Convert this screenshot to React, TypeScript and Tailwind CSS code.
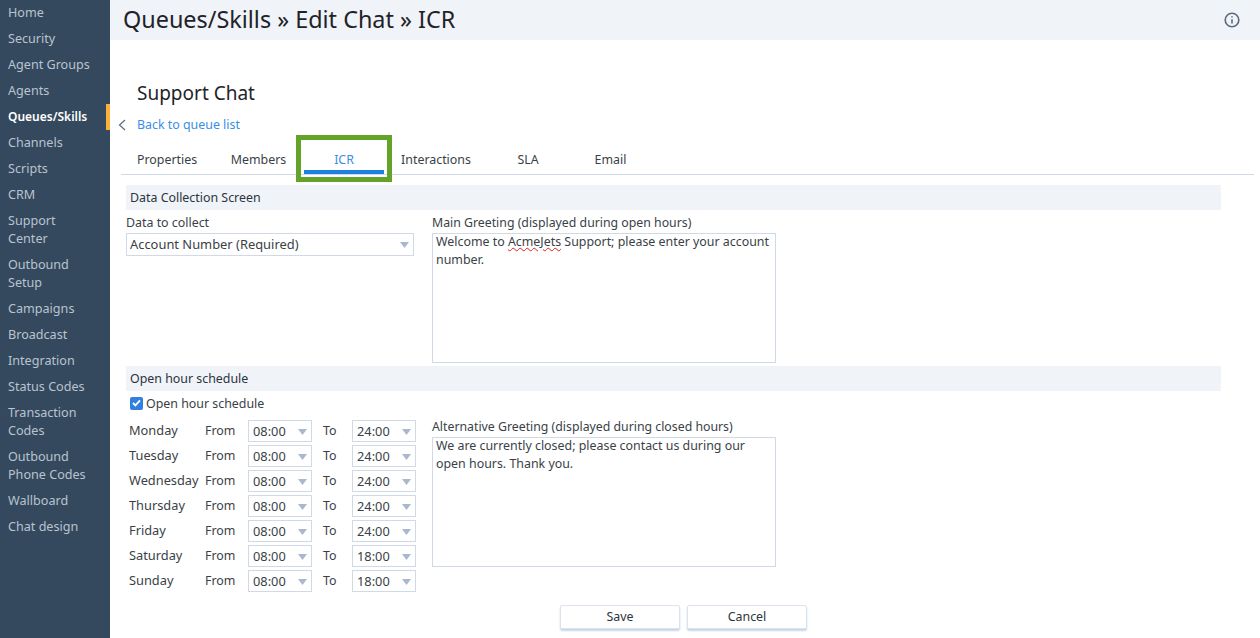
import React from "react";

const nav: { label: React.ReactNode; active?: boolean }[] = [
  { label: "Home" },
  { label: "Security" },
  { label: "Agent Groups" },
  { label: "Agents" },
  { label: "Queues/Skills", active: true },
  { label: "Channels" },
  { label: "Scripts" },
  { label: "CRM" },
  { label: <>Support<br />Center</> },
  { label: <>Outbound<br />Setup</> },
  { label: "Campaigns" },
  { label: "Broadcast" },
  { label: "Integration" },
  { label: "Status Codes" },
  { label: <>Transaction<br />Codes</> },
  { label: <>Outbound<br />Phone Codes</> },
  { label: "Wallboard" },
  { label: "Chat design" },
];

const days: [string, string, string][] = [
  ["Monday", "08:00", "24:00"],
  ["Tuesday", "08:00", "24:00"],
  ["Wednesday", "08:00", "24:00"],
  ["Thursday", "08:00", "24:00"],
  ["Friday", "08:00", "24:00"],
  ["Saturday", "08:00", "18:00"],
  ["Sunday", "08:00", "18:00"],
];

function Arrow() {
  return (
    <svg width="9" height="6" viewBox="0 0 9 6" className="shrink-0">
      <path d="M0 0H9L4.5 6Z" fill="#a9b8cc" />
    </svg>
  );
}

function TimeSelect({ value }: { value: string }) {
  return (
    <div className="w-[64px] h-[22px] border border-[#d0d9e6] flex items-center justify-between pl-[4px] pr-[4px] pt-[1px] bg-white text-[12.8px]">
      <span>{value}</span>
      <Arrow />
    </div>
  );
}

function SectionBar({ children }: { children: React.ReactNode }) {
  return <div className="h-[25px] w-[1095px] bg-[#f0f3f8] pl-[4px] leading-[25px] text-[#2c3440]">{children}</div>;
}

export default function App() {
  return (
    <div className="flex w-[1260px] h-[638px] overflow-hidden bg-white text-[12.4px] text-[#3a3f47] font-['Noto_Sans','Open_Sans',sans-serif]">
      <nav className="w-[110px] shrink-0 bg-[#34495e] text-[#b9c4cf] text-[12.6px]">
        {nav.map((n, i) => (
          <div
            key={i}
            className={
              n.active
                ? "py-1 pl-2 leading-[18px] font-semibold text-[12px] text-white border-r-4 border-[#fbb03b]"
                : "py-1 pl-2 leading-[18px]"
            }
          >
            {n.label}
          </div>
        ))}
      </nav>

      <main className="flex-1 min-w-0">
        <header className="h-10 bg-[#f0f3f8] flex items-center justify-between pl-[13px] pr-[20px]">
          <h1 className="text-[23.4px] leading-[38px] -mt-[2px] text-[#1f2329]">Queues/Skills » Edit Chat » ICR</h1>
          <svg width="16" height="16" viewBox="0 0 16 16" fill="none" stroke="#5b6b7d" strokeWidth="1.6">
            <circle cx="8" cy="8" r="6.8" />
            <path d="M8 7.2V11.6" />
            <path d="M8 4.2V5.6" />
          </svg>
        </header>

        <div className="pl-[27px] pt-[40px] text-[19px] leading-[26px] text-[#1f2329]">Support Chat</div>

        <div className="flex items-center h-[18px] mt-[10px] pl-[8px] text-[#3a8ee6]">
          <svg width="8" height="12" viewBox="0 0 8 12" fill="none" stroke="#5b6b7d" strokeWidth="1.2" className="mr-[11px]">
            <path d="M7 1L1.5 6L7 11" />
          </svg>
          <span>Back to queue list</span>
        </div>

        <div className="relative flex ml-[11px] w-[1133px] h-[40px] mt-[1px] border-b border-[#d0d9e6]">
          <div className="ml-[6px] w-[80px] text-center leading-[34px] pt-[8px]">Properties</div>
          <div className="ml-[11.5px] w-[80px] text-center leading-[34px] pt-[8px]">Members</div>
          <div className="ml-[5.5px] w-[80px] text-center leading-[34px] pt-[8px] text-[#3a8ee6] border-b-4 border-[#1e80e0] h-[39px]">ICR</div>
          <div className="ml-[12px] w-[80px] text-center leading-[34px] pt-[8px]">Interactions</div>
          <div className="ml-[12px] w-[80px] text-center leading-[34px] pt-[8px]">SLA</div>
          <div className="ml-[2.5px] w-[80px] text-center leading-[34px] pt-[8px]">Email</div>
          <div className="absolute left-[175px] top-0 w-[96px] h-[47px] border-[5px] border-[#63a32a]" />
        </div>

        <div className="pl-[16px] pt-[10px]">
          <SectionBar>Data Collection Screen</SectionBar>

          <div className="flex mt-[2px]">
            <div className="w-[306px]">
              <div className="leading-[22px] h-[20px] mb-[1px]">Data to collect</div>
              <div className="w-[288px] h-[23px] border border-[#d0d9e6] flex items-center justify-between pl-[3px] pr-[4px] text-[12.9px]">
                <span>Account Number (Required)</span>
                <Arrow />
              </div>
            </div>
            <div>
              <div className="leading-[22px] h-[20px] mb-[1px] text-[12.3px]">Main Greeting (displayed during open hours)</div>
              <div className="w-[344px] h-[130px] border border-[#d0d9e6] px-[3px] leading-[18px]">
                <div className="-mt-px">
                  Welcome to <span className="underline decoration-wavy decoration-[#e02020] decoration-1">AcmeJets</span> Support; please enter your account number.
                </div>
              </div>
            </div>
          </div>

          <div className="mt-[3px]">
            <SectionBar>Open hour schedule</SectionBar>
          </div>

          <div className="flex">
            <div className="w-[306px]">
              <div className="flex items-center h-[24px] pl-[4px]">
                <span className="w-[13px] h-[13px] rounded-[2px] bg-[#2f80e0] flex items-center justify-center mr-[3px]">
                  <svg width="9" height="8" viewBox="0 0 9 8" fill="none" stroke="#fff" strokeWidth="1.8">
                    <path d="M1 4L3.4 6.4L8 1.4" />
                  </svg>
                </span>
                <span className="pt-[2px]">Open hour schedule</span>
              </div>
              <div className="mt-[5px] flex flex-col gap-[3px] pl-[3px]">
                {days.map(([d, a, b]) => (
                  <div key={d} className="flex items-center h-[22px]">
                    <span className="w-[76px] -mt-px text-[12.8px]">{d}</span>
                    <span className="w-[43px]">From</span>
                    <TimeSelect value={a} />
                    <span className="w-[40px] pl-[11px]">To</span>
                    <TimeSelect value={b} />
                  </div>
                ))}
              </div>
            </div>
            <div className="pt-[25px]">
              <div className="leading-[22px] h-[20px] mb-[1px] text-[12.3px]">Alternative Greeting (displayed during closed hours)</div>
              <div className="w-[344px] h-[130px] border border-[#d0d9e6] px-[3px] leading-[18px]">
                <div className="-mt-px">We are currently closed; please contact us during our open hours. Thank you.</div>
              </div>
            </div>
          </div>

          <div className="flex gap-[7px] ml-[434px] mt-[13px]">
            <button className="w-[120px] h-[24px] rounded-[2px] bg-white border border-[#dde3ee] shadow-[0_2px_2px_#c8d4e6] text-[#2c3440]">Save</button>
            <button className="w-[120px] h-[24px] rounded-[2px] bg-white border border-[#dde3ee] shadow-[0_2px_2px_#c8d4e6] text-[#2c3440]">Cancel</button>
          </div>
        </div>
      </main>
    </div>
  );
}
